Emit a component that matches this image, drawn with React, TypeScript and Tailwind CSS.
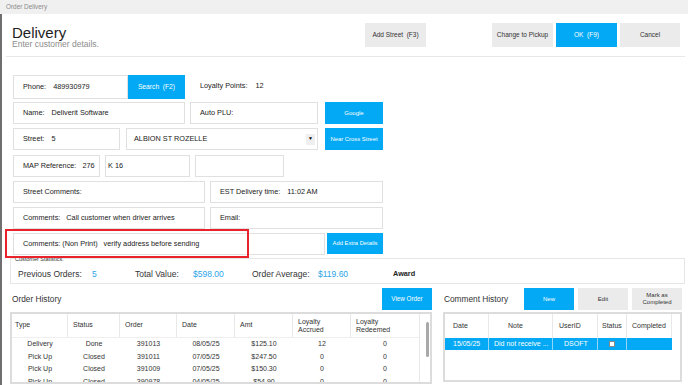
import React from "react";

function Field({ className, children }: { className: string; children?: React.ReactNode }) {
  return (
    <div className={"h-full bg-white border border-[#e0e0e0] flex items-center text-[7.3px] text-[#222] whitespace-nowrap " + className}>
      {children}
    </div>
  );
}

function BlueBtn({ className, children }: { className: string; children: React.ReactNode }) {
  return (
    <div className={"h-full bg-[#03a9f4] text-white flex items-center justify-center text-center whitespace-nowrap " + className}>
      {children}
    </div>
  );
}

function GrayBtn({ className, children }: { className: string; children: React.ReactNode }) {
  return (
    <div className={"h-full bg-[#ebebeb] text-[#333] flex items-center justify-center text-center whitespace-nowrap " + className}>
      {children}
    </div>
  );
}

const orders = [
  ["Delivery", "Done", "391013", "08/05/25", "$125.10", "12", "0"],
  ["Pick Up", "Closed", "391011", "07/05/25", "$247.50", "0", "0"],
  ["Pick Up", "Closed", "391009", "07/05/25", "$150.30", "0", "0"],
  ["Pick Up", "Closed", "390978", "04/05/25", "$54.90", "0", "0"],
];

const orderCols = ["w-[56px]", "w-[52px]", "w-[57px]", "w-[58px]", "w-[58px]", "w-[58px]", "w-[68px]"];

export default function App() {
  return (
    <div className="w-[688px] h-[385px] overflow-hidden bg-white font-['Liberation_Sans',Arial,sans-serif] text-[#222]">
      <div className="h-[14px] bg-[#f0f0f0] pl-[6px] text-[6.4px] leading-[14px] text-[#8a8a8a]">Order Delivery</div>
      <div className="h-[371px] border-l-2 border-[#6f6f6f] flex flex-col overflow-hidden">
        {/* header */}
        <div className="ml-[4px] w-[679px] h-[43px] shrink-0 border-b border-[#e8e8e8] flex pl-[6px]">
          <div className="w-[353px] pt-[10.5px]">
            <div className="text-[15px] leading-[15px] text-[#1e1e1e]">Delivery</div>
            <div className="text-[8.5px] leading-[9px] text-[#8c8c8c] mt-[0.5px]">Enter customer details.</div>
          </div>
          <div className="pt-[9px] flex h-[33px] text-[6.5px]">
            <GrayBtn className="w-[61px]">Add Street&nbsp;&nbsp;(F3)</GrayBtn>
            <GrayBtn className="w-[61px] ml-[66px]">Change to Pickup</GrayBtn>
            <BlueBtn className="w-[61px] ml-[3px]">OK&nbsp;&nbsp;(F9)</BlueBtn>
            <GrayBtn className="w-[60px] ml-[3px]">Cancel</GrayBtn>
          </div>
        </div>

        {/* form */}
        <div className="pl-[11px] flex flex-col shrink-0">
          <div className="mt-[18px] h-[24px] flex items-center">
            <Field className="w-[115px] pl-[9px]">
              <span>Phone:</span>
              <span className="ml-[7px]">489930979</span>
            </Field>
            <BlueBtn className="w-[57px] text-[6.7px]">Search&nbsp;&nbsp;(F2)</BlueBtn>
            <span className="ml-[15px] text-[7.3px] mb-[1px]">Loyalty Points:</span>
            <span className="ml-[8px] text-[7.3px] mb-[1px]">12</span>
          </div>
          <div className="mt-[3px] h-[22px] flex">
            <Field className="w-[172px] pl-[9px]">
              <span>Name:</span>
              <span className="ml-[7px]">Deliverit Software</span>
            </Field>
            <Field className="w-[128px] ml-[5px] pl-[9px]">Auto PLU:</Field>
            <BlueBtn className="w-[58px] ml-[7px] text-[6px]">Google</BlueBtn>
          </div>
          <div className="mt-[4px] h-[22px] flex">
            <Field className="w-[107px] pl-[9px]">
              <span>Street:</span>
              <span className="ml-[7px]">5</span>
            </Field>
            <Field className="w-[192px] ml-[6px] pl-[7px] pr-[2px]">
              <span className="flex-1">ALBION ST ROZELLE</span>
              <span className="w-[9px] h-[11px] bg-[#efefef] flex items-center justify-center text-[5px] text-black">▼</span>
            </Field>
            <BlueBtn className="w-[58px] ml-[7px] text-[5.9px]">Near Cross Street</BlueBtn>
          </div>
          <div className="mt-[5px] h-[22px] flex">
            <Field className="w-[87px] pl-[9px]">
              <span>MAP Reference:</span>
              <span className="ml-[6px]">276</span>
            </Field>
            <Field className="w-[85px] ml-[5px] pl-[2px]">K 16</Field>
            <Field className="w-[89px] ml-[5px]" />
          </div>
          <div className="mt-[4px] h-[22px] flex">
            <Field className="w-[192px] pl-[9px]">Street Comments:</Field>
            <Field className="w-[173px] ml-[5px] pl-[9px]">
              <span>EST Delivery time:</span>
              <span className="ml-[7px]">11:02 AM</span>
            </Field>
          </div>
          <div className="mt-[4px] h-[22px] flex">
            <Field className="w-[192px] pl-[9px]">
              <span>Comments:</span>
              <span className="ml-[6px]">Call customer when driver arrives</span>
            </Field>
            <Field className="w-[173px] ml-[5px] pl-[9px]">Email:</Field>
          </div>
          <div className="mt-[4px] h-[22px] flex relative">
            <Field className="w-[312px] pl-[9px]">
              <span>Comments: (Non Print)</span>
              <span className="ml-[6px]">verify address before sending</span>
            </Field>
            <BlueBtn className="w-[56px] ml-[2px] !h-[21px] text-[5.8px]">Add Extra Details</BlueBtn>
            <div className="absolute left-[-8px] top-[-4px] w-[244px] h-[29px] border-2 border-[#e8232c] z-10" />
          </div>
        </div>

        {/* stats */}
        <div className="mt-[3px] ml-[8px] w-[675px] h-[26px] shrink-0 border border-[#e6e6e6] relative">
          <div className="absolute left-[4px] top-[-3px] text-[5.5px] leading-[6px] text-[#333] bg-white">Customer Statistics:</div>
          <div className="h-full flex items-center pt-[7px] pl-[7px] text-[8.5px] whitespace-nowrap">
            <span className="w-[74px] text-[#333]">Previous Orders:</span>
            <span className="w-[43px] text-[#2ba4e8]">5</span>
            <span className="w-[58px] text-[#333]">Total Value:</span>
            <span className="w-[59px] text-[#2ba4e8]">$598.00</span>
            <span className="w-[66px] text-[#333]">Order Average:</span>
            <span className="w-[75px] text-[#2ba4e8]">$119.60</span>
            <span className="font-bold text-[7.3px] text-[#222]">Award</span>
          </div>
        </div>

        {/* bottom */}
        <div className="mt-[4px] flex">
          {/* order history */}
          <div className="ml-[8px] w-[422px] flex flex-col">
            <div className="h-[22px] flex items-center justify-between">
              <span className="pl-[2px] text-[8.3px] text-[#333]">Order History</span>
              <BlueBtn className="w-[50px] text-[6.3px]">View Order</BlueBtn>
            </div>
            <div className="mt-[2px] h-[72px] border-2 border-[#dcdcdc] flex overflow-hidden text-[7px] text-[#333]">
              <div className="w-[407px] flex flex-col">
                <div className="h-[24px] flex border-b border-[#efefef] shrink-0">
                  {["Type", "Status", "Order", "Date", "Amt"].map((h, i) => (
                    <div key={h} className={orderCols[i] + " h-full border-r border-[#e8e8e8] flex items-center " + (i === 0 ? "pl-[3px]" : "pl-[5px]")}>
                      {h}
                    </div>
                  ))}
                  <div className={orderCols[5] + " h-full border-r border-[#e8e8e8] flex items-center pl-[5px] leading-[8px]"}>
                    Loyalty
                    <br />
                    Accrued
                  </div>
                  <div className={orderCols[6] + " h-full flex items-center pl-[5px] leading-[8px]"}>
                    Loyalty
                    <br />
                    Redeemed
                  </div>
                </div>
                {orders.map((r, ri) => (
                  <div key={ri} className="h-[12.5px] flex shrink-0">
                    {r.map((c, ci) => (
                      <div key={ci} className={orderCols[ci] + " h-full flex items-center justify-center leading-[12px]"}>
                        {c}
                      </div>
                    ))}
                  </div>
                ))}
              </div>
              <div className="w-[11px] border-l border-[#e8e8e8] pt-[8px] flex flex-col">
                <div className="ml-[6px] w-[2.5px] h-[35px] bg-[#a9a9a9] rounded-full" />
              </div>
            </div>
          </div>

          {/* comment history */}
          <div className="ml-[11px] w-[239px] flex flex-col">
            <div className="h-[22px] flex items-center">
              <span className="pl-[1px] text-[8.3px] text-[#333]">Comment History</span>
              <div className="ml-auto h-full flex">
                <BlueBtn className="w-[50px] text-[6px]">New</BlueBtn>
                <GrayBtn className="w-[50px] ml-[4px] text-[6px]">Edit</GrayBtn>
                <GrayBtn className="w-[50px] ml-[4px] text-[6px] leading-[7.5px]">
                  Mark as
                  <br />
                  Completed
                </GrayBtn>
              </div>
            </div>
            <div className="mt-[2px] h-[70px] border-2 border-[#dcdcdc] flex flex-col overflow-hidden text-[7px] text-[#333]">
              <div className="h-[24px] flex shrink-0">
                <div className="w-[44px] h-full border-r border-[#e8e8e8] flex items-center pl-[8px]">Date</div>
                <div className="w-[64px] h-full border-r border-[#e8e8e8] flex items-center pl-[19px]">Note</div>
                <div className="w-[45px] h-full border-r border-[#e8e8e8] flex items-center pl-[6px]">UserID</div>
                <div className="w-[29px] h-full border-r border-[#e8e8e8] flex items-center pl-[4px]">Status</div>
                <div className="w-[45px] h-full border-r border-[#e8e8e8] flex items-center pl-[5px]">Completed</div>
              </div>
              <div className="h-[12px] flex shrink-0 text-white">
                <div className="w-[44px] h-full bg-[#03a9f4] border-r border-[#8fd6f9] flex items-center pl-[8px]">15/05/25</div>
                <div className="w-[64px] h-full bg-[#03a9f4] border-r border-[#8fd6f9] flex items-center pl-[5px] whitespace-nowrap">Did not receive ...</div>
                <div className="w-[45px] h-full bg-[#03a9f4] border-r border-[#8fd6f9] flex items-center pl-[11px]">DSOFT</div>
                <div className="w-[29px] h-full bg-[#03a9f4] border-r border-[#8fd6f9] flex items-center justify-center">
                  <div className="w-[6px] h-[6px] bg-white border border-[#888]" />
                </div>
                <div className="w-[45px] h-full bg-[#03a9f4]" />
              </div>
            </div>
          </div>
        </div>
      </div>
    </div>
  );
}
